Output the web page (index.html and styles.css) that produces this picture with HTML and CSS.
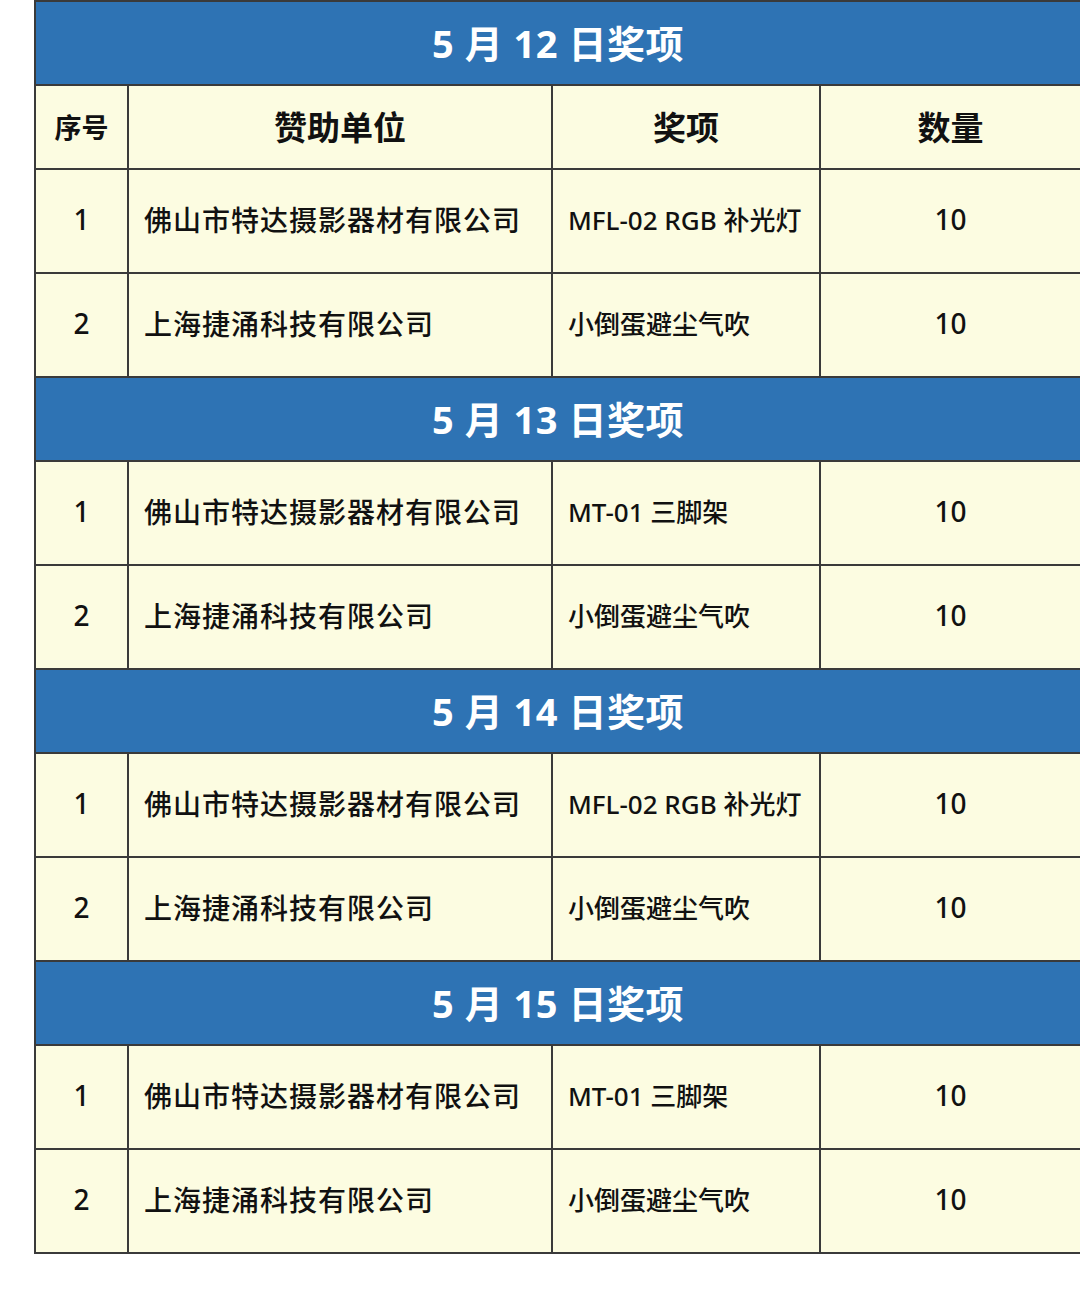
FILE: index.html
```html
<!DOCTYPE html>
<html lang="zh-CN">
<head>
<meta charset="utf-8">
<title>奖项</title>
<link rel="stylesheet" href="styles.css">
</head>
<body>
<table class="prize-table">
  <colgroup>
    <col class="c-no">
    <col class="c-sponsor">
    <col class="c-prize">
    <col class="c-qty">
  </colgroup>
  <tbody>
    <tr class="title-row"><th colspan="4">5 月 12 日奖项</th></tr>
    <tr class="head-row">
      <th class="h-no">序号</th>
      <th>赞助单位</th>
      <th>奖项</th>
      <th>数量</th>
    </tr>
    <tr class="data-row">
      <td class="no">1</td>
      <td class="sponsor wide">佛山市特达摄影器材有限公司</td>
      <td class="prize">MFL-02 RGB 补光灯</td>
      <td class="qty">10</td>
    </tr>
    <tr class="data-row">
      <td class="no">2</td>
      <td class="sponsor">上海捷涌科技有限公司</td>
      <td class="prize">小倒蛋避尘气吹</td>
      <td class="qty">10</td>
    </tr>

    <tr class="title-row"><th colspan="4">5 月 13 日奖项</th></tr>
    <tr class="data-row">
      <td class="no">1</td>
      <td class="sponsor wide">佛山市特达摄影器材有限公司</td>
      <td class="prize">MT-01 三脚架</td>
      <td class="qty">10</td>
    </tr>
    <tr class="data-row">
      <td class="no">2</td>
      <td class="sponsor">上海捷涌科技有限公司</td>
      <td class="prize">小倒蛋避尘气吹</td>
      <td class="qty">10</td>
    </tr>

    <tr class="title-row"><th colspan="4">5 月 14 日奖项</th></tr>
    <tr class="data-row">
      <td class="no">1</td>
      <td class="sponsor wide">佛山市特达摄影器材有限公司</td>
      <td class="prize">MFL-02 RGB 补光灯</td>
      <td class="qty">10</td>
    </tr>
    <tr class="data-row">
      <td class="no">2</td>
      <td class="sponsor">上海捷涌科技有限公司</td>
      <td class="prize">小倒蛋避尘气吹</td>
      <td class="qty">10</td>
    </tr>

    <tr class="title-row"><th colspan="4">5 月 15 日奖项</th></tr>
    <tr class="data-row">
      <td class="no">1</td>
      <td class="sponsor wide">佛山市特达摄影器材有限公司</td>
      <td class="prize">MT-01 三脚架</td>
      <td class="qty">10</td>
    </tr>
    <tr class="data-row">
      <td class="no">2</td>
      <td class="sponsor">上海捷涌科技有限公司</td>
      <td class="prize">小倒蛋避尘气吹</td>
      <td class="qty">10</td>
    </tr>
  </tbody>
</table>
</body>
</html>
```

FILE: styles.css
```css
html, body {
  margin: 0;
  padding: 0;
  background: #ffffff;
}

body {
  font-family: "Noto Sans", "Noto Sans CJK SC", sans-serif;
  color: #111111;
}

.prize-table {
  margin-left: 34px;
  width: 1046px;
  border-collapse: collapse;
  table-layout: fixed;
  background: #fcfce1;
}

.c-no { width: 93px; }
.c-sponsor { width: 424px; }
.c-prize { width: 268px; }
.c-qty { width: 261px; }

.prize-table th,
.prize-table td {
  border: 2px solid #3a3a3a;
  padding: 0;
  vertical-align: middle;
}

.title-row { height: 84px; }
.title-row th {
  background: #2e73b4;
  color: #ffffff;
  font-size: 38px;
  font-weight: 700;
  text-align: center;
  padding-bottom: 4px;
  letter-spacing: 0.5px;
}

.head-row { height: 84px; }
.head-row th {
  font-size: 33px;
  font-weight: 700;
  color: #111111;
  text-align: center;
  padding-bottom: 2px;
}
.head-row th.h-no {
  font-size: 27px;
}

.data-row { height: 104px; }
.data-row td {
  font-size: 28px;
  font-weight: 500;
  color: #111111;
  padding-bottom: 5px;
}

.no, .qty {
  text-align: center;
}

.sponsor {
  padding-left: 15px !important;
  letter-spacing: 1px;
  white-space: nowrap;
}
.sponsor.wide {
  letter-spacing: 1px;
}

.prize {
  padding-left: 15px !important;
  font-size: 26px !important;
  white-space: nowrap;
}
```
